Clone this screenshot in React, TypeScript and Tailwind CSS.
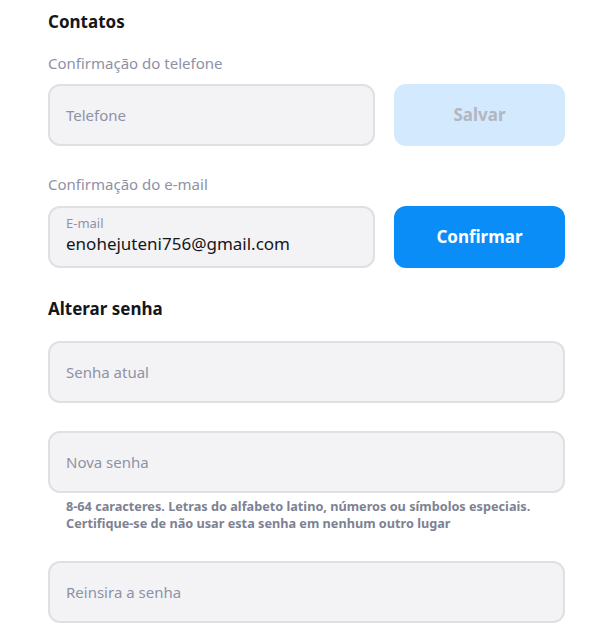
const font = { fontFamily: '"Noto Sans", "Lato", sans-serif' };

function Field({ placeholder, className = '' }: { placeholder: string; className?: string }) {
  return (
    <div
      className={`h-[62px] rounded-xl border-2 border-[#dfdfe4] bg-[#f3f3f6] px-4 flex items-center text-[15px] text-[#8e92a4] ${className}`}
    >
      {placeholder}
    </div>
  );
}

export default function App() {
  return (
    <div className="bg-white w-[602px] h-[631px] overflow-hidden pl-12 pr-[37px] pt-[11px]" style={font}>
      <h2 className="text-[17px] font-bold text-[#15161a] leading-[22px]">Contatos</h2>

      <p className="mt-[20px] text-[15px] leading-[20px] text-[#8e92a4]">Confirmação do telefone</p>
      <div className="mt-[11px] flex gap-[19px]">
        <Field placeholder="Telefone" className="flex-1" />
        <button className="w-[171px] h-[62px] rounded-xl bg-[#d3e9fd] text-[#b2b6c1] text-[17px] font-bold">
          Salvar
        </button>
      </div>

      <p className="mt-[28px] text-[15px] leading-[20px] text-[#8e92a4]">Confirmação do e-mail</p>
      <div className="mt-[12px] flex gap-[19px]">
        <div className="flex-1 h-[62px] rounded-xl border-2 border-[#dfdfe4] bg-[#f3f3f6] px-4 pt-[6px] flex flex-col">
          <span className="text-[13px] leading-[18px] text-[#8e92a4]">E-mail</span>
          <span className="text-[17px] leading-[24px] text-[#15161a]">enohejuteni756@gmail.com</span>
        </div>
        <button className="w-[171px] h-[62px] rounded-xl bg-[#0b8df8] text-white text-[17px] font-bold">
          Confirmar
        </button>
      </div>

      <h2 className="mt-[30px] text-[17px] font-bold text-[#15161a] leading-[22px]">Alterar senha</h2>

      <Field placeholder="Senha atual" className="mt-[21px]" />
      <Field placeholder="Nova senha" className="mt-[28px]" />
      <p className="mt-[5px] px-[18px] text-[12.7px] leading-[17px] font-bold text-[#7d8293]">
        8-64 caracteres. Letras do alfabeto latino, números ou símbolos especiais.
        <br />
        Certifique-se de não usar esta senha em nenhum outro lugar
      </p>
      <Field placeholder="Reinsira a senha" className="mt-[29px]" />
    </div>
  );
}
